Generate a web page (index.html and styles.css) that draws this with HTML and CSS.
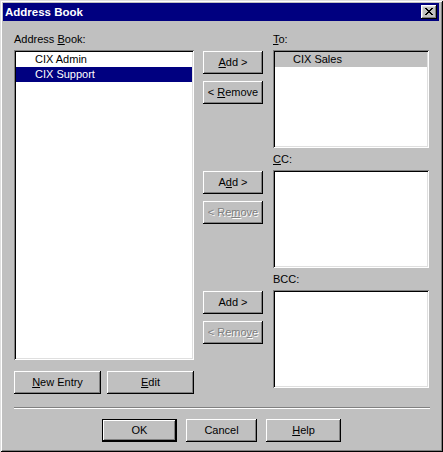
FILE: index.html
```html
<!DOCTYPE html>
<html>
<head>
<meta charset="utf-8">
<title>Address Book</title>
<link rel="stylesheet" href="styles.css">
</head>
<body>
<div class="window">
  <div class="titlebar">
    <span class="title">Address Book</span>
    <div class="close">
      <svg width="8" height="7" viewBox="0 0 8 7" shape-rendering="crispEdges">
        <rect x="0" y="0" width="2" height="1"/><rect x="6" y="0" width="2" height="1"/>
        <rect x="1" y="1" width="2" height="1"/><rect x="5" y="1" width="2" height="1"/>
        <rect x="2" y="2" width="4" height="1"/>
        <rect x="3" y="3" width="2" height="1"/>
        <rect x="2" y="4" width="4" height="1"/>
        <rect x="1" y="5" width="2" height="1"/><rect x="5" y="5" width="2" height="1"/>
        <rect x="0" y="6" width="2" height="1"/><rect x="6" y="6" width="2" height="1"/>
      </svg>
    </div>
  </div>
  <div class="content">
    <div class="main">
      <div class="left">
        <div class="label">Address <u>B</u>ook:</div>
        <div class="list big">
          <div class="item">CIX Admin</div>
          <div class="item sel">CIX Support</div>
        </div>
        <div class="leftbtns">
          <div class="btn wide"><span><u>N</u>ew Entry</span></div>
          <div class="btn wide"><span><u>E</u>dit</span></div>
        </div>
      </div>
      <div class="right">
        <div class="group">
          <div class="label glabel"><u>T</u>o:</div>
          <div class="btns">
            <div class="btn mid"><span><u>A</u>dd &gt;</span></div>
            <div class="btn mid"><span>&lt; <u>R</u>emove</span></div>
          </div>
          <div class="list small">
            <div class="item focus">CIX Sales</div>
          </div>
        </div>
        <div class="group">
          <div class="label glabel"><u>C</u>C:</div>
          <div class="btns">
            <div class="btn mid"><span>A<u>d</u>d &gt;</span></div>
            <div class="btn mid disabled"><span>&lt; Re<u>m</u>ove</span></div>
          </div>
          <div class="list small"></div>
        </div>
        <div class="group">
          <div class="label glabel">BCC:</div>
          <div class="btns">
            <div class="btn mid"><span>Add &gt;</span></div>
            <div class="btn mid disabled"><span>&lt; Remo<u>v</u>e</span></div>
          </div>
          <div class="list small"></div>
        </div>
      </div>
    </div>
    <div class="sep"></div>
    <div class="footer">
      <div class="btn foot default"><span>OK</span></div>
      <div class="btn foot cancel"><span>Cancel</span></div>
      <div class="btn foot"><span><u>H</u>elp</span></div>
    </div>
  </div>
</div>
</body>
</html>
```

FILE: styles.css
```css
html, body {
  margin: 0;
  padding: 0;
  background: #c0c0c0;
}
body {
  font-family: "Liberation Sans", Arial, sans-serif;
  font-size: 11px;
  color: #000;
}
.window {
  width: 443px;
  height: 452px;
  box-sizing: border-box;
  padding: 3px 4px 3px 3px;
  background: #c0c0c0;
  box-shadow: inset 1px 1px #dfdfdf, inset -1px -1px #000, inset 2px 2px #fff, inset -2px -2px #808080;
  display: flex;
  flex-direction: column;
}
.titlebar {
  height: 18px;
  background: #000080;
  color: #fff;
  display: flex;
  align-items: center;
  justify-content: space-between;
  padding: 0 2px 0 2px;
}
.title {
  font-weight: bold;
  font-size: 11.5px;
  line-height: 18px;
}
.close {
  width: 16px;
  height: 14px;
  box-sizing: border-box;
  background: #c0c0c0;
  box-shadow: inset -1px -1px #000, inset 1px 1px #fff, inset -2px -2px #808080, inset 2px 2px #dfdfdf;
  display: flex;
  align-items: center;
  justify-content: center;
  padding: 0 1px 1px 0;
}
.close svg { display: block; fill: #000; }
.content {
  padding: 12px 0 0 11px;
}
.main {
  display: flex;
  gap: 9px;
}
.label {
  height: 13px;
  line-height: 13px;
  margin-bottom: 4px;
  white-space: nowrap;
}
.left {
  width: 180px;
  display: flex;
  flex-direction: column;
}
.list {
  background: #fff;
  box-sizing: border-box;
  padding: 2px;
  box-shadow: inset 1px 1px #808080, inset -1px -1px #fff, inset 2px 2px #000, inset -2px -2px #dfdfdf;
}
.list.big {
  height: 310px;
}
.list.small {
  width: 156px;
  height: 98px;
}
.item {
  height: 15px;
  line-height: 15px;
  padding-left: 19px;
  white-space: nowrap;
}
.item.sel {
  background: #000080;
  color: #fff;
}
.item.focus {
  background: #c0c0c0;
  padding-left: 18px;
}
.leftbtns {
  display: flex;
  gap: 6px;
  margin-top: 11px;
}
.btn {
  height: 23px;
  box-sizing: border-box;
  background: #c0c0c0;
  box-shadow: inset -1px -1px #000, inset 1px 1px #fff, inset -2px -2px #808080;
  display: flex;
  align-items: center;
  justify-content: center;
  white-space: nowrap;
  padding-bottom: 1px;
}
.btn.wide { width: 87px; }
.btn.mid { width: 60px; }
.btn.disabled {
  color: #808080;
  text-shadow: 1px 1px 0 #fff;
}
.right {
  display: flex;
  flex-direction: column;
  gap: 5px;
}
.group {
  display: grid;
  grid-template-columns: 60px 156px;
  column-gap: 10px;
}
.glabel {
  grid-column: 2;
}
.btns {
  grid-column: 1;
  display: flex;
  flex-direction: column;
  gap: 7px;
  padding-top: 1px;
}
.sep {
  width: 416px;
  height: 0;
  border-top: 1px solid #808080;
  border-bottom: 1px solid #fff;
  margin-top: 13px;
}
.footer {
  display: flex;
  gap: 9px;
  margin-top: 10px;
  padding-left: 88px;
}
.btn.foot { width: 75px; }
.btn.foot.cancel { width: 71px; }
.btn.default {
  box-shadow: inset 0 0 0 1px #000, inset -2px -2px #000, inset 2px 2px #fff, inset -3px -3px #808080;
}
u { text-decoration: underline; text-underline-offset: 1px; }
```
